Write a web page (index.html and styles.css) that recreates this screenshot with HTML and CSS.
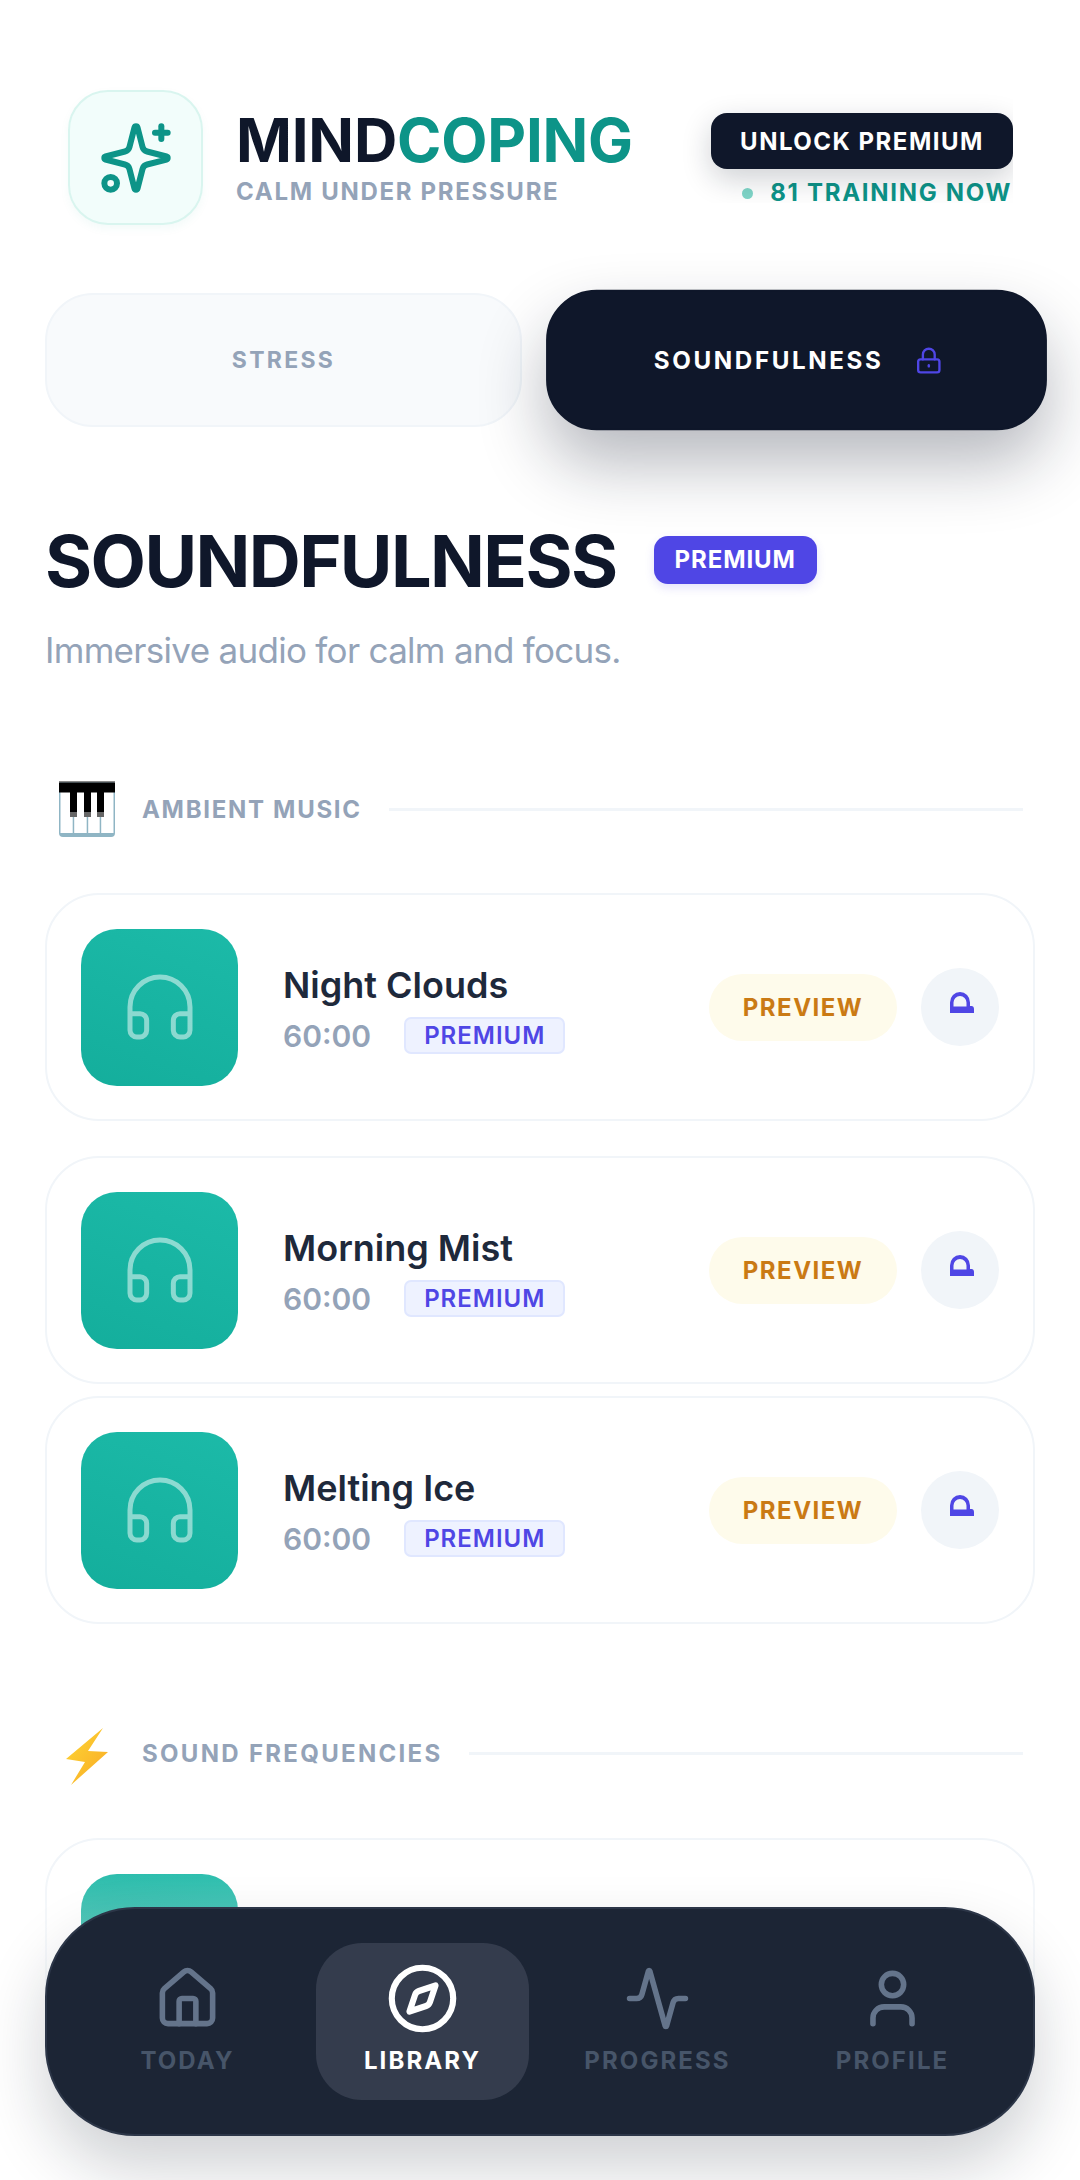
FILE: index.html
```html
<html>
  <head>
    <meta charset="UTF-8" />
    <meta name="viewport" content="width=device-width, initial-scale=1.0" />
    <title>MindCoping</title>
    <link rel="stylesheet" href="styles.css">
  </head>
  <body>
    <header class="topBar">
      <div class="brand">
        <div class="logoBox">
          <svg class="logoIcon" viewBox="0 0 24 24">
            <path d="M9.937 15.5A2 2 0 0 0 8.5 14.063l-6.135-1.582a.5.5 0 0 1 0-.962L8.5 9.936A2 2 0 0 0 9.937 8.5l1.582-6.135a.5.5 0 0 1 .963 0L14.063 8.5A2 2 0 0 0 15.5 9.937l6.135 1.581a.5.5 0 0 1 0 .964L15.5 14.063a2 2 0 0 0-1.437 1.437l-1.582 6.135a.5.5 0 0 1-.963 0z" />
            <path d="M20 2v4" />
            <path d="M22 4h-4" />
            <circle cx="4" cy="20" r="2" />
          </svg>
        </div>
        <div>
          <div class="brandName">MIND<span class="brandAccent">COPING</span></div>
          <div class="brandTag">CALM UNDER PRESSURE</div>
        </div>
      </div>
      <div class="topActions">
        <button class="unlock" type="button">UNLOCK PREMIUM</button>
        <div class="liveCount"><span class="liveDot"></span>81 TRAINING NOW</div>
      </div>
    </header>

    <nav class="tabs">
      <div class="tab">STRESS</div>
      <div class="tab tabActive">
        SOUNDFULNESS
        <svg class="tabLock" viewBox="0 0 24 24">
          <rect x="3" y="11" width="18" height="11" rx="2" />
          <path d="M7 11V7a5 5 0 0 1 10 0v4" />
          <path d="M12 16v1" />
        </svg>
      </div>
    </nav>

    <main class="content">
      <div class="titleRow">
        <h1>SOUNDFULNESS</h1>
        <span class="titleBadge">PREMIUM</span>
      </div>
      <p class="subtitle">Immersive audio for calm and focus.</p>

      <div class="sectionHead">
        <svg class="sectionIcon" viewBox="0 0 56 56">
          <rect x="0" y="0" width="56" height="56" rx="4" fill="#8fb5c4" />
          <rect x="1.500" y="8" width="53" height="44" fill="#fff" />
          <rect x="0" y="0" width="56" height="1.500" fill="#8a8a8a" />
          <rect x="0" y="1.500" width="56" height="10" fill="#000" />
          <rect x="11" y="8" width="7" height="28" fill="#000" />
          <rect x="25" y="8" width="7" height="28" fill="#000" />
          <rect x="38" y="8" width="7" height="28" fill="#000" />
          <rect x="11" y="31" width="7" height="5" fill="#666" />
          <rect x="25" y="31" width="7" height="5" fill="#666" />
          <rect x="38" y="31" width="7" height="5" fill="#666" />
          <rect x="13.700" y="36" width="1.500" height="16" fill="#8fb5c4" />
          <rect x="27.700" y="36" width="1.500" height="16" fill="#8fb5c4" />
          <rect x="40.700" y="36" width="1.500" height="16" fill="#8fb5c4" />
        </svg>
        <span class="sectionLabel">AMBIENT MUSIC</span>
        <span class="sectionLine"></span>
      </div>

      <div class="track">
        <div class="thumb">
          <svg class="thumbIcon" viewBox="0 0 24 24"><path d="M3 14h3a2 2 0 0 1 2 2v3a2 2 0 0 1-2 2H5a2 2 0 0 1-2-2v-7a9 9 0 0 1 18 0v7a2 2 0 0 1-2 2h-1a2 2 0 0 1-2-2v-3a2 2 0 0 1 2-2h3" /></svg>
        </div>
        <div class="trackInfo">
          <div class="trackName">Night Clouds</div>
          <div class="trackMeta"><span class="trackTime">60:00</span><span class="trackBadge">PREMIUM</span></div>
        </div>
        <div class="previewPill">PREVIEW</div>
        <div class="lockCircle">
          <svg class="lockIcon" viewBox="0 0 24 21"><path fill-rule="evenodd" d="M0 21V10.500a10 10.500 0 0 1 20 0V14h1.500c1.500 0 2.500 1 2.500 3v4zM3.500 14.500h13v-4a6.500 6.500 0 0 0-13 0z" /></svg>
        </div>
      </div>

      <div class="track">
        <div class="thumb">
          <svg class="thumbIcon" viewBox="0 0 24 24"><path d="M3 14h3a2 2 0 0 1 2 2v3a2 2 0 0 1-2 2H5a2 2 0 0 1-2-2v-7a9 9 0 0 1 18 0v7a2 2 0 0 1-2 2h-1a2 2 0 0 1-2-2v-3a2 2 0 0 1 2-2h3" /></svg>
        </div>
        <div class="trackInfo">
          <div class="trackName">Morning Mist</div>
          <div class="trackMeta"><span class="trackTime">60:00</span><span class="trackBadge">PREMIUM</span></div>
        </div>
        <div class="previewPill">PREVIEW</div>
        <div class="lockCircle">
          <svg class="lockIcon" viewBox="0 0 24 21"><path fill-rule="evenodd" d="M0 21V10.500a10 10.500 0 0 1 20 0V14h1.500c1.500 0 2.500 1 2.500 3v4zM3.500 14.500h13v-4a6.500 6.500 0 0 0-13 0z" /></svg>
        </div>
      </div>

      <div class="track trackTight">
        <div class="thumb">
          <svg class="thumbIcon" viewBox="0 0 24 24"><path d="M3 14h3a2 2 0 0 1 2 2v3a2 2 0 0 1-2 2H5a2 2 0 0 1-2-2v-7a9 9 0 0 1 18 0v7a2 2 0 0 1-2 2h-1a2 2 0 0 1-2-2v-3a2 2 0 0 1 2-2h3" /></svg>
        </div>
        <div class="trackInfo">
          <div class="trackName">Melting Ice</div>
          <div class="trackMeta"><span class="trackTime">60:00</span><span class="trackBadge">PREMIUM</span></div>
        </div>
        <div class="previewPill">PREVIEW</div>
        <div class="lockCircle">
          <svg class="lockIcon" viewBox="0 0 24 21"><path fill-rule="evenodd" d="M0 21V10.500a10 10.500 0 0 1 20 0V14h1.500c1.500 0 2.500 1 2.500 3v4zM3.500 14.500h13v-4a6.500 6.500 0 0 0-13 0z" /></svg>
        </div>
      </div>

      <div class="sectionHead sectionHeadNext">
        <svg class="sectionIcon sectionBolt" viewBox="0 0 56 56">
          <defs>
            <linearGradient id="boltFill" x1="0" y1="0" x2="1" y2="1">
              <stop offset="0" stop-color="#fdd835" />
              <stop offset="1" stop-color="#f9a825" />
            </linearGradient>
          </defs>
          <path d="M44 3 7 34l19 3-14 23L49 27 29 26z" fill="url(#boltFill)" />
        </svg>
        <span class="sectionLabel">SOUND FREQUENCIES</span>
        <span class="sectionLine"></span>
      </div>

      <div class="track trackLast">
        <div class="thumb"></div>
      </div>
    </main>

    <div class="bottomFade"></div>

    <nav class="bottomNav">
      <div class="navItem">
        <svg class="navIcon" viewBox="0 0 24 24">
          <path d="M15 21v-8a1 1 0 0 0-1-1h-4a1 1 0 0 0-1 1v8" />
          <path d="M3 10a2 2 0 0 1 .709-1.528l7-5.999a2 2 0 0 1 2.582 0l7 5.999A2 2 0 0 1 21 10v9a2 2 0 0 1-2 2H5a2 2 0 0 1-2-2z" />
        </svg>
        <span>TODAY</span>
      </div>
      <div class="navItem navActive">
        <svg class="navIcon" viewBox="0 0 24 24">
          <circle cx="12" cy="12" r="10" />
          <path d="m16.240 7.760-1.804 5.411a2 2 0 0 1-1.265 1.265L7.760 16.240l1.804-5.411a2 2 0 0 1 1.265-1.265z" />
        </svg>
        <span>LIBRARY</span>
      </div>
      <div class="navItem">
        <svg class="navIcon" viewBox="0 0 24 24">
          <path d="M22 12h-2.480a2 2 0 0 0-1.930 1.460l-2.350 8.360a.25.25 0 0 1-.480 0L9.240 2.180a.25.25 0 0 0-.480 0l-2.350 8.360A2 2 0 0 1 4.480 12H2" />
        </svg>
        <span>PROGRESS</span>
      </div>
      <div class="navItem">
        <svg class="navIcon" viewBox="0 0 24 24">
          <path d="M19 21v-2a4 4 0 0 0-4-4H9a4 4 0 0 0-4 4v2" />
          <circle cx="12" cy="7" r="4" />
        </svg>
        <span>PROFILE</span>
      </div>
    </nav>
  </body>
</html>
```

FILE: styles.css
```css
html,
body {
  margin: 0;
  background-color: #fff;
}

body {
  position: relative;
  width: 1080px;
  height: 2180px;
  overflow: hidden;
  color: #0f172a;
  font-family: Inter, "Liberation Sans", sans-serif;
}

svg {
  display: block;
  fill: none;
  stroke-linecap: round;
  stroke-linejoin: round;
}

/* Header */
.topBar {
  display: flex;
  justify-content: space-between;
  align-items: flex-start;
  padding: 90px 67px 0 68px;
  height: 135px;
}

.brand {
  display: flex;
  align-items: center;
  gap: 33px;
}

.logoBox {
  display: flex;
  align-items: center;
  justify-content: center;
  box-sizing: border-box;
  width: 135px;
  height: 135px;
  border: 2px solid #d9f5ef;
  border-radius: 40px;
  background-color: #f2fdfb;
  box-shadow: 0 4px 10px rgba(13, 148, 136, 0.05);
}

.logoIcon {
  width: 76px;
  height: 76px;
  stroke: #0d9488;
  stroke-width: 1.9;
}

.brandName {
  padding-top: 2px;
  font-size: 60px;
  font-weight: 700;
  line-height: 60px;
  letter-spacing: -0.2px;
}

.brandAccent {
  color: #0d9488;
}

.brandTag {
  margin-top: 7px;
  color: #94a3b8;
  font-size: 24px;
  font-weight: 700;
  line-height: 30px;
  letter-spacing: 1.7px;
}

.topActions {
  display: flex;
  flex-direction: column;
  align-items: flex-end;
  padding-top: 23px;
}

/* the shadow stops short at the bottom and right of the button, as in the design */
.unlock {
  flex: none;
  width: 302px;
  height: 56px;
  border: 0;
  border-radius: 16px;
  background-color: #0f172a;
  box-shadow: 0 10px 30px rgba(15, 23, 42, 0.2);
  clip-path: inset(-40px 0 -34px -40px);
  color: #fff;
  font-family: inherit;
  font-size: 24px;
  font-weight: 700;
  letter-spacing: 1.5px;
}

.liveCount {
  display: flex;
  align-items: center;
  gap: 17px;
  margin-top: 12px;
  padding-right: 1px;
  color: #0d9488;
  font-size: 24px;
  font-weight: 700;
  line-height: 24px;
  letter-spacing: 1.7px;
  white-space: nowrap;
}

.liveDot {
  width: 11px;
  height: 11px;
  border-radius: 50%;
  background-color: #7fd6c8;
}

/* Tabs */
.tabs {
  display: grid;
  grid-template-columns: 1fr 1fr;
  gap: 36px;
  margin: 68px 45px 0;
}

.tab {
  display: flex;
  align-items: center;
  justify-content: center;
  box-sizing: border-box;
  height: 134px;
  border: 2px solid #f1f5f9;
  border-radius: 48px;
  background-color: #f8fafc;
  color: #94a3b8;
  font-size: 23px;
  font-weight: 700;
  letter-spacing: 2.3px;
}

.tabActive {
  gap: 30px;
  padding: 1px 0 0 4px;
  border-color: #0f172a;
  background-color: #0f172a;
  box-shadow: 0 32px 64px rgba(15, 23, 42, 0.3);
  color: #fff;
  letter-spacing: 2.5px;
  transform: scale(1.05);
}

.tabLock {
  width: 27px;
  height: 27px;
  stroke: #4f46e5;
  stroke-width: 2;
}

/* Content */
.content {
  padding: 0 45px;
}

.titleRow {
  display: flex;
  align-items: center;
  gap: 37px;
  margin-top: 96px;
}

h1 {
  margin: 0;
  font-size: 72px;
  font-weight: 700;
  line-height: 76px;
  letter-spacing: -1.6px;
}

.titleBadge {
  height: 48px;
  margin-top: -2px;
  padding: 0 21px;
  border-radius: 14px;
  background-color: #4f46e5;
  box-shadow: 0 4px 10px rgba(79, 70, 229, 0.15);
  color: #fff;
  font-size: 24px;
  font-weight: 700;
  line-height: 48px;
  letter-spacing: 0.9px;
}

.subtitle {
  margin: 29px 0 0;
  color: #94a3b8;
  font-size: 35px;
  font-weight: 400;
  line-height: 44px;
  letter-spacing: -0.7px;
}

.sectionHead {
  display: flex;
  align-items: center;
  gap: 27px;
  margin-top: 109px;
  padding: 0 12px 0 14px;
}

.sectionHeadNext {
  margin-top: 101px;
}

.sectionIcon {
  flex: none;
  width: 56px;
  height: 56px;
}

.sectionBolt {
  overflow: visible;
}

.sectionLabel {
  color: #94a3b8;
  font-size: 24px;
  font-weight: 700;
  letter-spacing: 1.7px;
  white-space: nowrap;
}

.sectionHeadNext .sectionLabel {
  letter-spacing: 2.3px;
}

.sectionLine {
  flex: 1;
  height: 3px;
  background-color: #f1f5f9;
}

/* Track cards */
.track {
  display: flex;
  align-items: center;
  box-sizing: border-box;
  height: 228px;
  margin-top: 35px;
  padding: 34px;
  border: 2px solid #f1f5f9;
  border-radius: 54px;
  background-color: #fff;
}

.sectionHead + .track {
  margin-top: 56px;
}

.sectionHeadNext + .track {
  margin-top: 57px;
}

.track.trackTight {
  margin-top: 12px;
}

.thumb {
  display: flex;
  flex: none;
  align-items: center;
  justify-content: center;
  width: 157px;
  height: 157px;
  border-radius: 36px;
  background-image: linear-gradient(200deg, #1cbaa8, #14ae9c);
}

.thumbIcon {
  width: 80px;
  height: 80px;
  stroke: rgba(255, 255, 255, 0.5);
  stroke-width: 1.5;
}

.trackInfo {
  flex: 1;
  padding: 3px 0 0 45px;
}

.trackName {
  color: #1e293b;
  font-size: 36px;
  font-weight: 600;
  line-height: 44px;
}

.trackMeta {
  display: flex;
  align-items: center;
  gap: 33px;
  margin-top: 10px;
}

.trackTime {
  color: #94a3b8;
  font-size: 30px;
  font-weight: 600;
}

.trackBadge {
  box-sizing: border-box;
  height: 37px;
  padding: 0 18px;
  border: 2px solid #e0e7ff;
  border-radius: 7px;
  background-color: #eef2ff;
  color: #4f46e5;
  font-size: 24px;
  font-weight: 600;
  line-height: 33px;
  letter-spacing: 1px;
}

.previewPill {
  width: 188px;
  height: 67px;
  border-radius: 34px;
  background-color: #fefbeb;
  color: #ca7a14;
  font-size: 24px;
  font-weight: 700;
  line-height: 68px;
  letter-spacing: 1.5px;
  text-align: center;
}

.lockCircle {
  display: flex;
  flex: none;
  align-items: center;
  justify-content: center;
  width: 78px;
  height: 78px;
  margin-left: 24px;
  border-radius: 50%;
  background-color: #f1f5f9;
}

.lockIcon {
  width: 24px;
  height: 21px;
  margin: -9px 0 0 4px;
  fill: #4f46e5;
}

/* Bottom */
.bottomFade {
  position: absolute;
  left: 0;
  right: 0;
  bottom: 0;
  height: 330px;
  background-image: linear-gradient(to top, #fff 10%, rgba(255, 255, 255, 0));
}

.bottomNav {
  position: absolute;
  left: 45px;
  bottom: 44px;
  display: grid;
  grid-template-columns: repeat(4, 1fr);
  gap: 22px;
  box-sizing: border-box;
  width: 990px;
  height: 229px;
  padding: 34px;
  border: 2px solid #2c3648;
  border-radius: 90px;
  background-color: #1c2535;
  box-shadow: 0 32px 64px rgba(15, 23, 42, 0.2);
}

.navItem {
  display: flex;
  flex-direction: column;
  align-items: center;
  padding-top: 22px;
  border-radius: 46px;
  color: #475569;
  font-size: 24px;
  font-weight: 700;
  line-height: 30px;
  letter-spacing: 2.1px;
}

.navIcon {
  width: 67px;
  height: 67px;
  margin-bottom: 14px;
  stroke: #64748b;
  stroke-width: 2;
}

.navActive {
  background-color: #343c4d;
  color: #fff;
}

.navActive .navIcon {
  stroke: #fff;
  transform: scale(1.1);
}
```
